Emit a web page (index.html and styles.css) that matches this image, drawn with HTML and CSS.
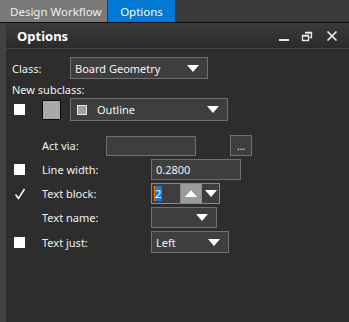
FILE: index.html
```html
<!DOCTYPE html>
<html>
<head>
<meta charset="utf-8">
<link rel="stylesheet" href="styles.css">
</head>
<body>
<div class="tabs">
  <div class="tab tab-gray">Design Workflow</div>
  <div class="tab tab-blue">Options</div>
</div>
<div class="main">
  <div class="strip"></div>
  <div class="panel">
    <div class="header">
      <div class="title">Options</div>
      <div class="hicons">
        <svg class="hicon" width="14" height="14" viewBox="0 0 14 14"><rect x="2" y="10" width="10" height="2" fill="#e8e8e8"/></svg>
        <svg class="hicon" width="14" height="14" viewBox="0 0 14 14"><path d="M4.5 3.5h6v5h-2M1.5 6.5h6v5h-6z" fill="none" stroke="#e8e8e8" stroke-width="1.3"/><rect x="4" y="3" width="7" height="1.6" fill="#e8e8e8"/><rect x="1" y="6" width="7" height="1.6" fill="#e8e8e8"/></svg>
        <svg class="hicon" width="14" height="14" viewBox="0 0 14 14"><path d="M2.5 2.5l9 9M11.5 2.5l-9 9" stroke="#f0f0f0" stroke-width="1.6"/></svg>
      </div>
    </div>
    <div class="body">
      <div class="row r-class">
        <div class="lbl w58">Class:</div>
        <div class="combo c-class"><span class="ctext">Board Geometry</span><span class="arrow"></span></div>
      </div>
      <div class="row r-new"><div class="lbl">New subclass:</div></div>
      <div class="row r-sub">
        <div class="cbcell"><span class="cb"></span></div>
        <div class="swcell"><span class="swatch"></span></div>
        <div class="combo c-sub"><span class="minisw"></span><span class="ctext">Outline</span><span class="arrow"></span></div>
      </div>
      <div class="row r-act">
        <div class="cbcell"></div>
        <div class="lbl w64">Act via:</div>
        <div class="input i-act"></div>
        <div class="btn">...</div>
      </div>
      <div class="row r-opt">
        <div class="cbcell"><span class="cb"></span></div>
        <div class="lbl w109">Line width:</div>
        <div class="input i-lw">0.2800</div>
      </div>
      <div class="row r-opt">
        <div class="cbcell"><svg class="check" width="12" height="12" viewBox="0 0 12 12"><path d="M1.5 6.5l3 4 6-9.5" fill="none" stroke="#ffffff" stroke-width="1.5"/></svg></div>
        <div class="lbl w109">Text block:</div>
        <div class="spin">
          <div class="spintext"><span class="caret"></span><span class="sel">2</span></div>
          <div class="spinbtn up"><span class="tri-up"></span></div>
          <div class="spinbtn down"><span class="tri-down"></span></div>
        </div>
      </div>
      <div class="row r-opt">
        <div class="cbcell"></div>
        <div class="lbl w109">Text name:</div>
        <div class="combo c-name"><span class="ctext"></span><span class="arrow"></span></div>
      </div>
      <div class="row r-opt r-just">
        <div class="cbcell"><span class="cb"></span></div>
        <div class="lbl w109">Text just:</div>
        <div class="combo c-just"><span class="ctext">Left</span><span class="arrow"></span></div>
      </div>
    </div>
  </div>
</div>
</body>
</html>
```
FILE: styles.css
```css
html, body {
  margin: 0;
  padding: 0;
  width: 349px;
  height: 322px;
  overflow: hidden;
  background: #2d2d2d;
  font-family: "Noto Sans", "Open Sans", sans-serif;
  font-size: 11px;
  color: #f0f0f0;
}
.tabs {
  display: flex;
  height: 22px;
  background: #3b3b3b;
  border-bottom: 1px solid #0e0e0e;
}
.tab {
  display: flex;
  align-items: center;
  height: 22px;
  font-size: 11.5px;
}
.tab-gray {
  width: 97px;
  padding-left: 10px;
  background: #797979;
  color: #eeeeee;
  margin-right: 1px;
}
.tab-blue {
  width: 67px;
  justify-content: center;
  background: #0078d4;
  color: #ffffff;
}
.main {
  display: flex;
  height: 299px;
}
.strip {
  width: 6px;
  background: #424242;
}
.panel {
  flex: 1;
  display: flex;
  flex-direction: column;
}
.header {
  height: 25px;
  display: flex;
  align-items: center;
  justify-content: space-between;
  background: linear-gradient(#3a3a3a, #2b2b2b);
  border-bottom: 1px solid #454545;
  padding: 0 10px 0 11px;
}
.title {
  font-weight: bold;
  font-size: 13px;
  color: #ffffff;
}
.hicons {
  display: flex;
  align-items: center;
}
.hicon { display: block; margin-left: 10px; }
.body {
  padding: 8px 0 0 6px;
  display: flex;
  flex-direction: column;
}
.row {
  display: flex;
  align-items: center;
}
.r-class { height: 22px; }
.r-new { height: 18px; margin-top: 1px; }
.r-sub { height: 23px; }
.r-act { height: 21px; margin-top: 14px; }
.r-opt { height: 21px; margin-top: 3px; }
.r-just { height: 22px; }
.lbl { white-space: nowrap; }
.w58 { width: 58px; }
.w64 { width: 64px; }
.w109 { width: 109px; }
.cbcell {
  width: 30px;
  display: flex;
  align-items: center;
  padding-left: 2px;
  box-sizing: border-box;
}
.cb {
  display: block;
  width: 11px;
  height: 11px;
  background: #ffffff;
}
.check { display: block; }
.swcell { width: 28px; }
.swatch {
  display: block;
  width: 17px;
  height: 18px;
  background: #a9a9a9;
  border: 1px solid #0a0a0a;
}
.combo {
  height: 100%;
  box-sizing: border-box;
  border: 1px solid #707070;
  background: #3e3e3e;
  display: flex;
  align-items: center;
  padding-left: 4px;
  padding-right: 8px;
  color: #f4f4f4;
}
.ctext { flex: 1; white-space: nowrap; }
.arrow {
  width: 0;
  height: 0;
  border-left: 6px solid transparent;
  border-right: 6px solid transparent;
  border-top: 7px solid #ffffff;
}
.c-class { width: 138px; }
.c-sub { width: 158px; padding-left: 6px; }
.minisw {
  width: 8px;
  height: 8px;
  border: 1px solid #e8e8e8;
  background: #a0a0a0;
  margin-right: 10px;
}
.c-name { width: 66px; }
.c-just { width: 78px; }
.input {
  height: 100%;
  box-sizing: border-box;
  border: 1px solid #707070;
  background: #3e3e3e;
  display: flex;
  align-items: center;
  padding-left: 4px;
}
.i-act { width: 90px; height: 20px; }
.btn {
  margin-left: 34px;
  width: 22px;
  height: 21px;
  box-sizing: border-box;
  border: 1px solid #707070;
  background: #3e3e3e;
  display: flex;
  align-items: center;
  justify-content: center;
  font-size: 10px;
}
.i-lw { width: 90px; }
.spin {
  width: 69px;
  height: 100%;
  box-sizing: border-box;
  border: 1px solid #8a8a8a;
  display: flex;
  background: #3e3e3e;
}
.spintext {
  width: 26px;
  display: flex;
  align-items: center;
  padding-left: 2px;
  border-right: 1px solid #8a8a8a;
}
.caret {
  width: 1px;
  height: 15px;
  background: #ff7a00;
}
.sel {
  background: #1779e0;
  color: #ffffff;
  line-height: 15px;
  padding-right: 1px;
}
.spinbtn {
  display: flex;
  align-items: center;
  justify-content: center;
}
.up {
  width: 20px;
  background: #9c9c9c;
  border-right: 1px solid #8a8a8a;
}
.down { flex: 1; }
.tri-up {
  width: 0; height: 0;
  border-left: 6px solid transparent;
  border-right: 6px solid transparent;
  border-bottom: 7px solid #ffffff;
}
.tri-down {
  width: 0; height: 0;
  border-left: 6px solid transparent;
  border-right: 6px solid transparent;
  border-top: 7px solid #ffffff;
}
```
